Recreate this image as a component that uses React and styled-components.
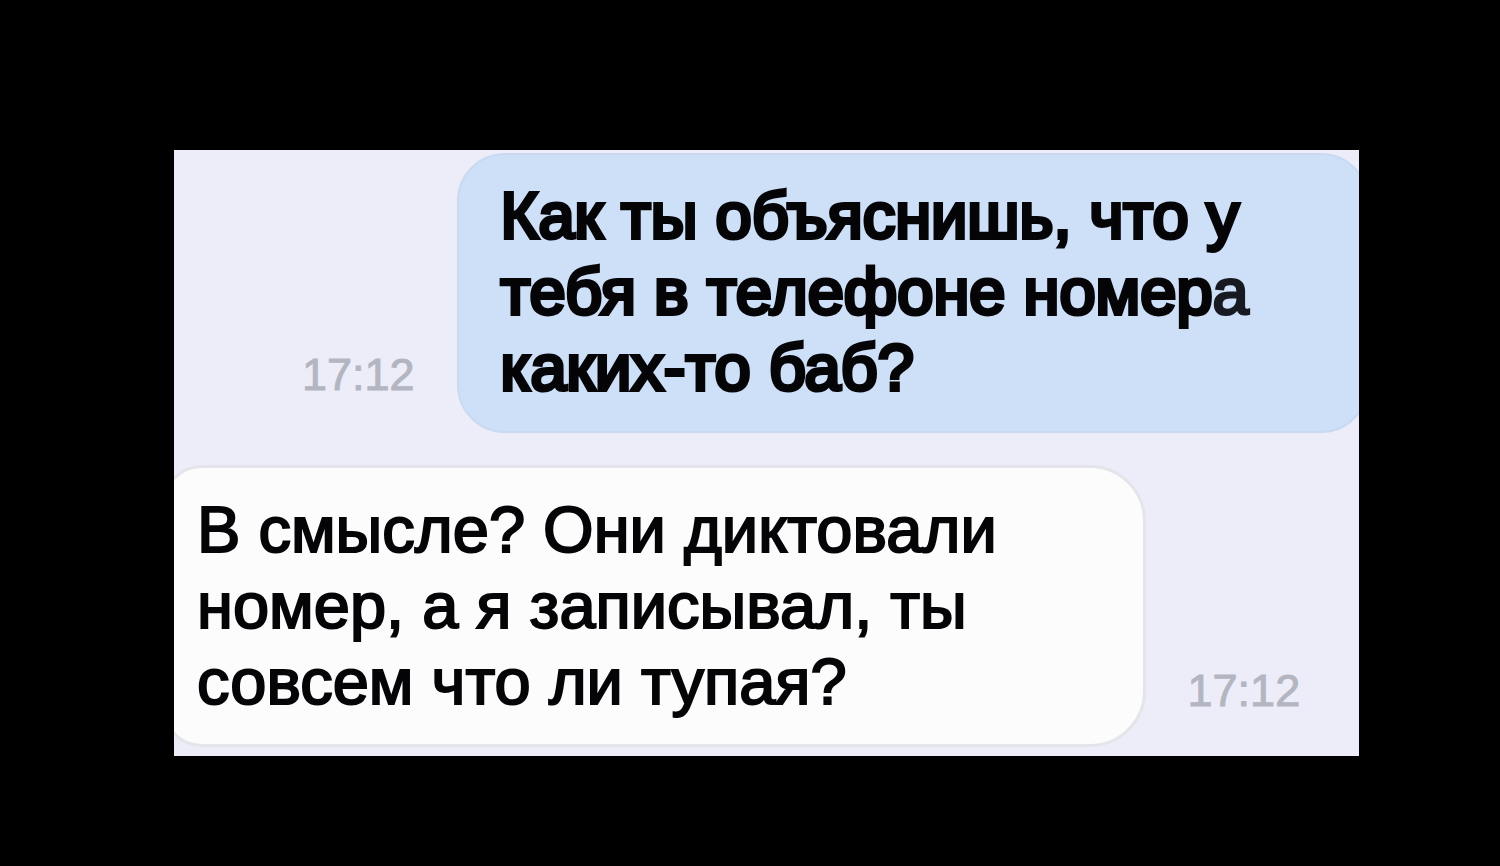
import React from 'react'
import styled, { createGlobalStyle } from 'styled-components'

const GlobalStyle = createGlobalStyle`
    body {
        margin: 0;
        background: #000;
        font-family: 'Liberation Sans', Arial, sans-serif;
    }
`

const Page = styled.main`
    box-sizing: border-box;
    min-height: 100vh;
    padding: 39px 141px 0 174px;
    display: flex;
    flex-direction: column;
    justify-content: center;
`

const Chat = styled.section`
    box-sizing: border-box;
    display: flex;
    flex-direction: column;
    gap: 32px;
    padding: 3px 0 9px;
    background: #ecedf9;
    overflow: hidden;
`

const Row = styled.article`
    display: flex;
    align-items: flex-end;
    justify-content: ${({ $own }) => ($own ? 'flex-end' : 'flex-start')};
    gap: 42px;
`

const Bubble = styled.div`
    box-sizing: border-box;
    flex-shrink: 0;
    width: ${({ $own }) => ($own ? '77%' : '83%')};
    margin: ${({ $own }) => ($own ? '0 -10px 0 0' : '0 0 0 -12px')};
    padding: ${({ $own }) => ($own ? '23px 42px 25px' : '24px 32px')};
    border-radius: ${({ $own }) => ($own ? '48px' : '40px 56px 56px 40px')};
    background: ${({ $own }) => ($own ? '#cedff8' : '#fcfcfd')};
    border: ${({ $own }) => ($own ? '2px solid #c9d9f2' : '3px solid #e4e5ea')};
`

const Message = styled.p`
    margin: 0;
    color: #050508;
    font-size: 65px;
    line-height: 76px;
    -webkit-text-stroke: ${({ $own }) => ($own ? '4px' : '2px')} #050508;
`

const Faded = styled.span`
    color: #181a22;
    -webkit-text-stroke: 3px #181a22;
`

const Time = styled.time`
    margin-bottom: ${({ $own }) => ($own ? '34px' : '32px')};
    color: #b3b6c1;
    font-size: 45px;
    line-height: 48px;
    -webkit-text-stroke: 1px #b3b6c1;
`

export default function App() {
    return (
        <>
            <GlobalStyle />
            <Page>
                <Chat>
                    <Row $own>
                        <Time $own dateTime="17:12">
                            17:12
                        </Time>
                        <Bubble $own>
                            <Message $own>
                                Как ты объяснишь, что у<br />
                                тебя в телефоне номер<Faded>а</Faded>
                                <br />
                                каких-то баб?
                            </Message>
                        </Bubble>
                    </Row>
                    <Row>
                        <Bubble>
                            <Message>
                                В смысле? Они диктовали<br />
                                номер, а я записывал, ты<br />
                                совсем что ли тупая?
                            </Message>
                        </Bubble>
                        <Time dateTime="17:12">17:12</Time>
                    </Row>
                </Chat>
            </Page>
        </>
    )
}
